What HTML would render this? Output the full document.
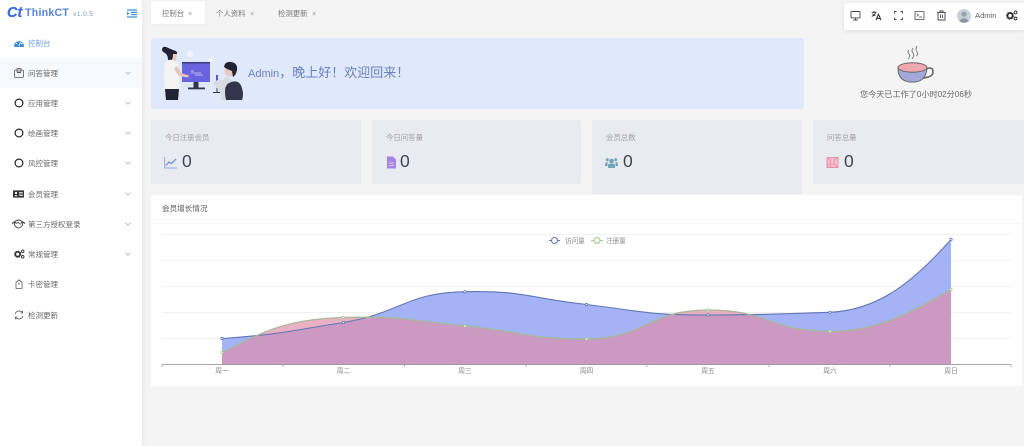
<!DOCTYPE html>
<html lang="zh"><head><meta charset="utf-8"><title>ThinkCT</title>
<style>
*{box-sizing:border-box;margin:0;padding:0}
html,body{width:1024px;height:446px;overflow:hidden;background:#f4f4f4;font-family:"Liberation Sans","Noto Sans CJK SC",sans-serif}
#root{position:absolute;left:0;top:0;width:1024px;height:446px;filter:blur(.35px)}
.abs,.m,.m *{position:absolute}
.abs{position:absolute}
#side{position:absolute;left:0;top:0;width:142px;height:446px;background:#fff;box-shadow:1px 0 4px rgba(0,0,0,.06)}
.m{left:0;width:142px;height:30px;color:#666;font-size:7.5px;line-height:31px}
.m span{left:28px;top:0;white-space:nowrap}
.m svg.i{left:14px;top:10px;width:10px;height:10px}
.m svg.c{left:125px;top:13px;width:6px;height:4px}
.t{position:absolute;top:0;height:24px;line-height:28px;font-size:7.4px;color:#777;white-space:nowrap}
.card{position:absolute;background:#e8ebf0;border-radius:2px}
.card b{position:absolute;left:14px;top:12px;font-weight:normal;font-size:7.4px;color:#a2a2a2;white-space:nowrap}
.card em{position:absolute;top:31px;font-style:normal;font-size:17.5px;line-height:20px;color:#3d4656}
.card svg{position:absolute;left:13px;top:36px;width:13px;height:13px}
.tb{position:absolute;top:10px;width:11px;height:11px}
.cx{font-size:6.8px;fill:#888;text-anchor:middle}
</style></head><body><div id="root">
<div id="side">
<div class="abs" style="left:7px;top:5px;font-size:14.5px;line-height:16px;font-weight:bold;font-style:italic;color:#3f6fd8;-webkit-text-stroke:.3px #3f6fd8">Ct</div>
<div class="abs" style="left:25px;top:7px;font-size:10.6px;line-height:13px;font-weight:bold;color:#5585d4;letter-spacing:.25px">ThinkCT</div>
<div class="abs" style="left:73px;top:10px;font-size:6.8px;line-height:9px;color:#7a98bc;letter-spacing:.3px">v1.0.5</div>
<svg class="abs" style="left:127px;top:9px;width:10px;height:9px" viewBox="0 0 10 9"><path d="M0 1H10M4 3.400H10M4 5.700H10M0 8H10" stroke="#3d8fd8" stroke-width="1.200"/><path d="M0 2.600L2.600 4.500L0 6.400Z" fill="#3d8fd8"/></svg>

<div class="m" style="top:28px;color:#6aa2dc"><svg class="i" viewBox="0 0 10 10"><path d="M0 8A5 5 0 1 1 10 8Q10 9 9 9H1Q0 9 0 8Z" fill="#3b8ad8"/><path d="M5 8L6.500 4" stroke="#fff" stroke-width="1"/><circle cx="2.400" cy="5.600" r=".7" fill="#fff"/><circle cx="3.600" cy="3.200" r=".7" fill="#fff"/><circle cx="7.800" cy="5.600" r=".7" fill="#fff"/></svg><span>控制台</span></div>

<div class="m" style="top:58px;background:#f7fafc"><svg class="i" viewBox="0 0 10 10"><rect x=".6" y="2" width="8.800" height="7.400" rx="1" fill="none" stroke="#555" stroke-width=".8"/><path d="M3 .6H7V4H3ZM3 4.600H7" fill="none" stroke="#555" stroke-width=".8"/></svg><span>问答管理</span><svg class="c" viewBox="0 0 6 4"><path d="M.5.7L3 3.200L5.500.7" fill="none" stroke="#aaa" stroke-width=".7"/></svg></div>
<div class="m" style="top:88px"><svg class="i" viewBox="0 0 10 10"><circle cx="5" cy="5" r="3.900" fill="none" stroke="#222" stroke-width="1.200"/></svg><span>应用管理</span><svg class="c" viewBox="0 0 6 4"><path d="M.5.7L3 3.200L5.500.7" fill="none" stroke="#aaa" stroke-width=".7"/></svg></div>
<div class="m" style="top:118px"><svg class="i" viewBox="0 0 10 10"><circle cx="5" cy="5" r="3.900" fill="none" stroke="#222" stroke-width="1.200"/></svg><span>绘画管理</span><svg class="c" viewBox="0 0 6 4"><path d="M.5.7L3 3.200L5.500.7" fill="none" stroke="#aaa" stroke-width=".7"/></svg></div>
<div class="m" style="top:148px"><svg class="i" viewBox="0 0 10 10"><circle cx="5" cy="5" r="3.900" fill="none" stroke="#222" stroke-width="1.200"/></svg><span>风控管理</span><svg class="c" viewBox="0 0 6 4"><path d="M.5.7L3 3.200L5.500.7" fill="none" stroke="#aaa" stroke-width=".7"/></svg></div>
<div class="m" style="top:179px"><svg class="i" viewBox="0 0 11 10" style="width:11px;left:13px"><rect y="1.400" width="11" height="7.200" rx=".6" fill="#333"/><circle cx="3" cy="4" r="1.100" fill="#fff"/><path d="M1.300 7.300Q3 4.600 4.700 7.300Z" fill="#fff"/><path d="M6 3.400H9.800M6 5H9.800M6 6.600H9.800" stroke="#fff" stroke-width=".7"/></svg><span>会员管理</span><svg class="c" viewBox="0 0 6 4"><path d="M.5.7L3 3.200L5.500.7" fill="none" stroke="#aaa" stroke-width=".7"/></svg></div>
<div class="m" style="top:209px"><svg class="i" viewBox="0 0 13 10" style="width:13px;left:12px"><path d="M0 4.500L2.200 3L4 4M13 4.500L10.800 3L9 4" stroke="#333" stroke-width="1.100" fill="none"/><path d="M3 2.400Q6.500 -.4 10 2.400L10.600 6Q8 9.500 6.200 9Q4 8.300 2.400 6Z" fill="none" stroke="#444" stroke-width=".9"/><path d="M4 4.600L6.200 3.400L9 5.400" stroke="#444" stroke-width=".8" fill="none"/></svg><span>第三方授权登录</span><svg class="c" viewBox="0 0 6 4"><path d="M.5.7L3 3.200L5.500.7" fill="none" stroke="#aaa" stroke-width=".7"/></svg></div>
<div class="m" style="top:239px"><svg class="i" viewBox="0 0 11 10" style="width:11px"><circle cx="3.700" cy="5.200" r="2.400" fill="none" stroke="#333" stroke-width="1.700"/><circle cx="3.700" cy="5.200" r="3.200" fill="none" stroke="#333" stroke-width=".9" stroke-dasharray="1.200 1.300"/><circle cx="8.700" cy="2.200" r="1.300" fill="none" stroke="#333" stroke-width=".9"/><circle cx="8.700" cy="7.800" r="1.300" fill="none" stroke="#333" stroke-width=".9"/></svg><span>常规管理</span><svg class="c" viewBox="0 0 6 4"><path d="M.5.7L3 3.200L5.500.7" fill="none" stroke="#aaa" stroke-width=".7"/></svg></div>
<div class="m" style="top:269px"><svg class="i" viewBox="0 0 10 10"><path d="M2 3.400L5 .8L8 3.400V9.400H2Z" fill="none" stroke="#555" stroke-width=".8"/><path d="M5 3.400V6" stroke="#555" stroke-width=".8"/></svg><span>卡密管理</span></div>
<div class="m" style="top:300px"><svg class="i" viewBox="0 0 10 10"><path d="M1.200 4A4 4 0 0 1 8 2.200M8.800 6A4 4 0 0 1 2 7.800" fill="none" stroke="#555" stroke-width=".8"/><path d="M8.600 .8V3H6.500M1.400 9.200V7H3.500" fill="none" stroke="#555" stroke-width=".8"/></svg><span>检测更新</span></div>
</div>

<div class="abs" style="left:151px;top:1px;width:54px;height:23px;background:#fff;box-shadow:0 0 4px rgba(0,0,0,.05)"></div>
<div class="t" style="left:162px">控制台</div><div class="t" style="left:188px;color:#999">×</div>
<div class="t" style="left:216px">个人资料</div><div class="t" style="left:250px;color:#999">×</div>
<div class="t" style="left:278px">检测更新</div><div class="t" style="left:312px;color:#999">×</div>

<div class="abs" style="left:844px;top:3px;width:180px;height:27px;background:#fff;box-shadow:0 1px 4px rgba(0,0,0,.1)"></div>
<svg class="tb" style="left:850px" viewBox="0 0 11 11"><rect x="1" y="1.500" width="9" height="6.400" rx=".8" fill="none" stroke="#444" stroke-width=".9"/><path d="M5.500 8V10M3.300 10H7.700" stroke="#444" stroke-width=".9"/></svg>
<svg class="tb" style="left:871px" viewBox="0 0 11 11"><path d="M.5 2.300H5.500M3 1V2.300M4.600 2.300Q3.600 5.200 .8 6.400M1.600 3.600Q2.600 5.400 4.600 6" fill="none" stroke="#333" stroke-width=".9"/><path d="M5 10L7.500 4.400L10 10M5.900 8.400H9.100" fill="none" stroke="#333" stroke-width="1.100"/></svg>
<svg class="tb" style="left:893px" viewBox="0 0 11 11"><path d="M1.500 3.500V1.500H3.500M7.500 1.500H9.500V3.500M9.500 7.500V9.500H7.500M3.500 9.500H1.500V7.500" fill="none" stroke="#444" stroke-width=".9"/></svg>
<svg class="tb" style="left:914px" viewBox="0 0 11 11"><rect x="1" y="1.400" width="9" height="8.200" rx=".9" fill="none" stroke="#444" stroke-width=".8"/><path d="M2.800 3.600L4.400 5L2.800 6.400M5 7H8" fill="none" stroke="#444" stroke-width=".7"/></svg>
<svg class="tb" style="left:936px" viewBox="0 0 11 11"><path d="M2 2.600H9V10H2ZM1 2.600H10M4 2.600V1H7V2.600M4.400 4.500V8M6.600 4.500V8" fill="none" stroke="#444" stroke-width=".9"/></svg>
<svg class="abs" style="left:957px;top:9px;width:14px;height:14px" viewBox="0 0 14 14"><circle cx="7" cy="7" r="7" fill="#c8d0da"/><circle cx="7" cy="5.200" r="2.600" fill="#98a2ae"/><path d="M2 12Q7 6.400 12 12Q7 15.500 2 12Z" fill="#8e98a4"/></svg>
<div class="abs" style="left:975px;top:11px;font-size:7.6px;line-height:10px;color:#666">Admin</div>
<svg class="abs" style="left:1006px;top:10px;width:12px;height:11px" viewBox="0 0 11 10"><circle cx="3.700" cy="5.200" r="2.400" fill="none" stroke="#333" stroke-width="1.700"/><circle cx="3.700" cy="5.200" r="3.200" fill="none" stroke="#333" stroke-width=".9" stroke-dasharray="1.200 1.300"/><circle cx="8.700" cy="2.200" r="1.300" fill="none" stroke="#333" stroke-width=".9"/><circle cx="8.700" cy="7.800" r="1.300" fill="none" stroke="#333" stroke-width=".9"/></svg>

<div class="abs" style="left:151px;top:38px;width:653px;height:71px;background:#e0e9fb;border-radius:3px"></div>
<svg class="abs" style="left:155px;top:42px;width:95px;height:62px" viewBox="0 0 95 62">
<circle cx="35" cy="12" r="3" fill="#f2f5fc"/>
<circle cx="56" cy="18" r="2.500" fill="#f2f5fc"/>
<path d="M14 10H22L21 19H14Z" fill="#eac8c0"/>
<path d="M7 7Q8 4 11 5L18 8Q23 9 22 12L18 12Q18 17 16 19L13 18Q13 13 10 11Q7 10 7 7Z" fill="#222436"/>
<path d="M10 20Q15 16 20 19Q24 22 24 32L25 47H10Q8 33 10 20Z" fill="#f3f3f3"/>
<rect x="27" y="20" width="28" height="20" fill="#6a63e0"/><rect x="27" y="20" width="28" height="1.500" fill="#3c3a80"/>
<path d="M36 29H39M36 31H46M40 33H48" stroke="#d8d5fa" stroke-width=".7"/>
<path d="M19 27L24 34L33 35.500L34 33.500L26 31L22 24Z" fill="#e9c3bb"/>
<rect x="38.500" y="40" width="5" height="6" fill="#33344e"/><rect x="33" y="45.500" width="17" height="1.800" fill="#33344e"/>
<path d="M10 47H24L23 58H11Z" fill="#222436"/>
<path d="M62 33V50M58 50.500H66" stroke="#33344e" stroke-width="1" fill="none"/>
<rect x="61" y="33" width="2" height="7" fill="#5a55d8"/>
<path d="M58 41L64 37L68 38L72 34L78 40L72 58H66L65 50Z" fill="#d6dce0"/>
<circle cx="75" cy="29" r="5.500" fill="#e9c9c2"/>
<path d="M69 25Q70 19 76 20Q83 21 82 28Q81 33 78 35L77 29L72 27Z" fill="#222436"/>
<path d="M71 58Q68 44 74 41Q84 36 87 46Q89 53 87 58Z" fill="#33354c"/>
</svg>
<div class="abs" style="left:248px;top:65px;font-size:13px;line-height:16px;color:#6a7fc0;white-space:nowrap"><span style="font-size:11px">Admin</span>，晚上好！欢迎回来！</div>

<svg class="abs" style="left:895px;top:44px;width:40px;height:42px" viewBox="0 0 40 42">
<path d="M14 6Q12 8 14 10T13 15M18 4Q16 7 18 9T17 15M22 2Q20 5 22 8T21 12" fill="none" stroke="#777" stroke-width=".9"/>
<path d="M31 25Q38 22 38 28Q38 33 28 34" fill="none" stroke="#666" stroke-width="1.600"/>
<path d="M3 24Q3 37 15 38H20Q31 37 32 24Z" fill="#a3a8d8" stroke="#666" stroke-width="1"/>
<ellipse cx="17.500" cy="23.500" rx="14.500" ry="4.700" fill="#f0a9b0" stroke="#666" stroke-width="1"/>
</svg>
<div class="abs" style="left:860px;top:89px;font-size:8.15px;line-height:12px;color:#666;white-space:nowrap">您今天已工作了0小时02分06秒</div>

<div class="card" style="left:151px;top:120px;width:210px;height:64px"><b>今日注册会员</b>
<svg viewBox="0 0 13 13"><path d="M.6 1V12H13" fill="none" stroke="#9aa6ea" stroke-width="1"/><path d="M2 9.500L5 6L7.500 7.500L12 3" fill="none" stroke="#7f8ce0" stroke-width="1.300"/></svg><em style="left:31px">0</em></div>
<div class="card" style="left:372px;top:120px;width:209px;height:64px"><b>今日问答量</b>
<svg viewBox="0 0 13 13"><path d="M2 .5H8L11 3.500V12.500H2Z" fill="#a883e6"/><path d="M4 7H9M4 9.500H9" stroke="#e8e0fa" stroke-width=".8"/></svg><em style="left:28px">0</em></div>
<div class="card" style="left:592px;top:120px;width:210px;height:74px"><b>会员总数</b>
<svg viewBox="0 0 13 13"><circle cx="6.500" cy="5" r="2.300" fill="#6fa4bb"/><circle cx="2.300" cy="3.800" r="1.500" fill="#6fa4bb"/><circle cx="10.700" cy="3.800" r="1.500" fill="#6fa4bb"/><path d="M3 12V9Q3 7.500 6.500 7.500T10 9V12Z" fill="#6fa4bb"/><path d="M0 9Q0 6 2.500 6V10H0ZM13 9Q13 6 10.500 6V10H13Z" fill="#6fa4bb"/></svg><em style="left:31px">0</em></div>
<div class="card" style="left:813px;top:120px;width:211px;height:64px"><b>问答总量</b>
<svg viewBox="0 0 13 13"><rect x="1" y="1.500" width="11" height="10" fill="#f3c2cf" stroke="#e88fa8" stroke-width="1"/><path d="M1 1.500L5 5L3 8L1 11.500M12 1.500L8 4V8H4.500V11M8 8L12 11.500" fill="none" stroke="#e88fa8" stroke-width=".9"/></svg><em style="left:31px">0</em></div>

<div class="abs" style="left:151px;top:195px;width:871px;height:191px;background:#fff"></div>
<div class="abs" style="left:162px;top:203px;font-size:7.6px;line-height:11px;color:#555">会员增长情况</div>
<svg class="abs" style="left:151px;top:195px;width:871px;height:191px" viewBox="151 195 871 191">
<path d="M151 223.500H1022" stroke="#f6f6f6"/>
<path d="M162 234.500H1011M162 260.500H1011M162 286.500H1011M162 312.500H1011M162 338.500H1011" stroke="#ececec" stroke-width=".8"/>
<path d="M222 338.500C282 334 283 332 343.500 322.500C404 312 405 293 465 291.700C525 290.500 527 298 586.500 304.500C647 312 648 315 708 315C769 315 770 314 830 312.300C880 310 915 280 951 239.500V364.500H222Z" fill="#a4b2f6"/>
<path d="M222 352.500C260 334 283 319 343.500 317.500C404 316 405 320 465 326C525 332 527 339.500 586.500 339C647 338 648 310 708 310C769 310 770 331.500 830 331.500C880 331.500 915 310 951 289.500V364.500H222Z" fill="rgb(222,140,167)" fill-opacity=".67"/>
<path d="M222 338.500C282 334 283 332 343.500 322.500C404 312 405 293 465 291.700C525 290.500 527 298 586.500 304.500C647 312 648 315 708 315C769 315 770 314 830 312.300C880 310 915 280 951 239.500" fill="none" stroke="#6176b8" stroke-width="1.100"/>
<path d="M222 352.500C260 334 283 319 343.500 317.500C404 316 405 320 465 326C525 332 527 339.500 586.500 339C647 338 648 310 708 310C769 310 770 331.500 830 331.500C880 331.500 915 310 951 289.500" fill="none" stroke="#a8b898" stroke-width="1.300"/>
<g fill="#fff" stroke="#6176b8" stroke-width=".8"><circle cx="222" cy="338.500" r="1.200"/><circle cx="343.500" cy="322.500" r="1.200"/><circle cx="465" cy="291.700" r="1.200"/><circle cx="586.500" cy="304.500" r="1.200"/><circle cx="708" cy="315" r="1.200"/><circle cx="830" cy="312.300" r="1.200"/><circle cx="951" cy="239.500" r="1.200"/></g>
<g fill="#fff" stroke="#a3c88e" stroke-width=".8"><circle cx="222" cy="352.500" r="1.200"/><circle cx="343.500" cy="317.500" r="1.200"/><circle cx="465" cy="326" r="1.200"/><circle cx="586.500" cy="339" r="1.200"/><circle cx="708" cy="310" r="1.200"/><circle cx="830" cy="331.500" r="1.200"/><circle cx="951" cy="289.500" r="1.200"/></g>
<path d="M162 364.500H1011M162 364.500V367M283 364.500V367M404.500 364.500V367M526 364.500V367M647 364.500V367M769 364.500V367M890 364.500V367M1011 364.500V367" stroke="#8a8a8a" stroke-width=".7" fill="none"/>
<text class="cx" x="222" y="373">周一</text><text class="cx" x="343.500" y="373">周二</text><text class="cx" x="465" y="373">周三</text><text class="cx" x="586.500" y="373">周四</text><text class="cx" x="708" y="373">周五</text><text class="cx" x="830" y="373">周六</text><text class="cx" x="951" y="373">周日</text>
<path d="M549 240.500H560" stroke="#6176b8"/><circle cx="554.500" cy="240.500" r="3" fill="#fff" stroke="#6176b8" stroke-width="1.100"/>
<text x="565" y="243" style="font-size:6.6px;fill:#888">访问量</text>
<path d="M591 240.500H603" stroke="#9ccb84"/><circle cx="597" cy="240.500" r="3" fill="#fff" stroke="#9ccb84" stroke-width="1.100"/>
<text x="606" y="243" style="font-size:6.6px;fill:#888">注册量</text>
</svg>
</div></body></html>
